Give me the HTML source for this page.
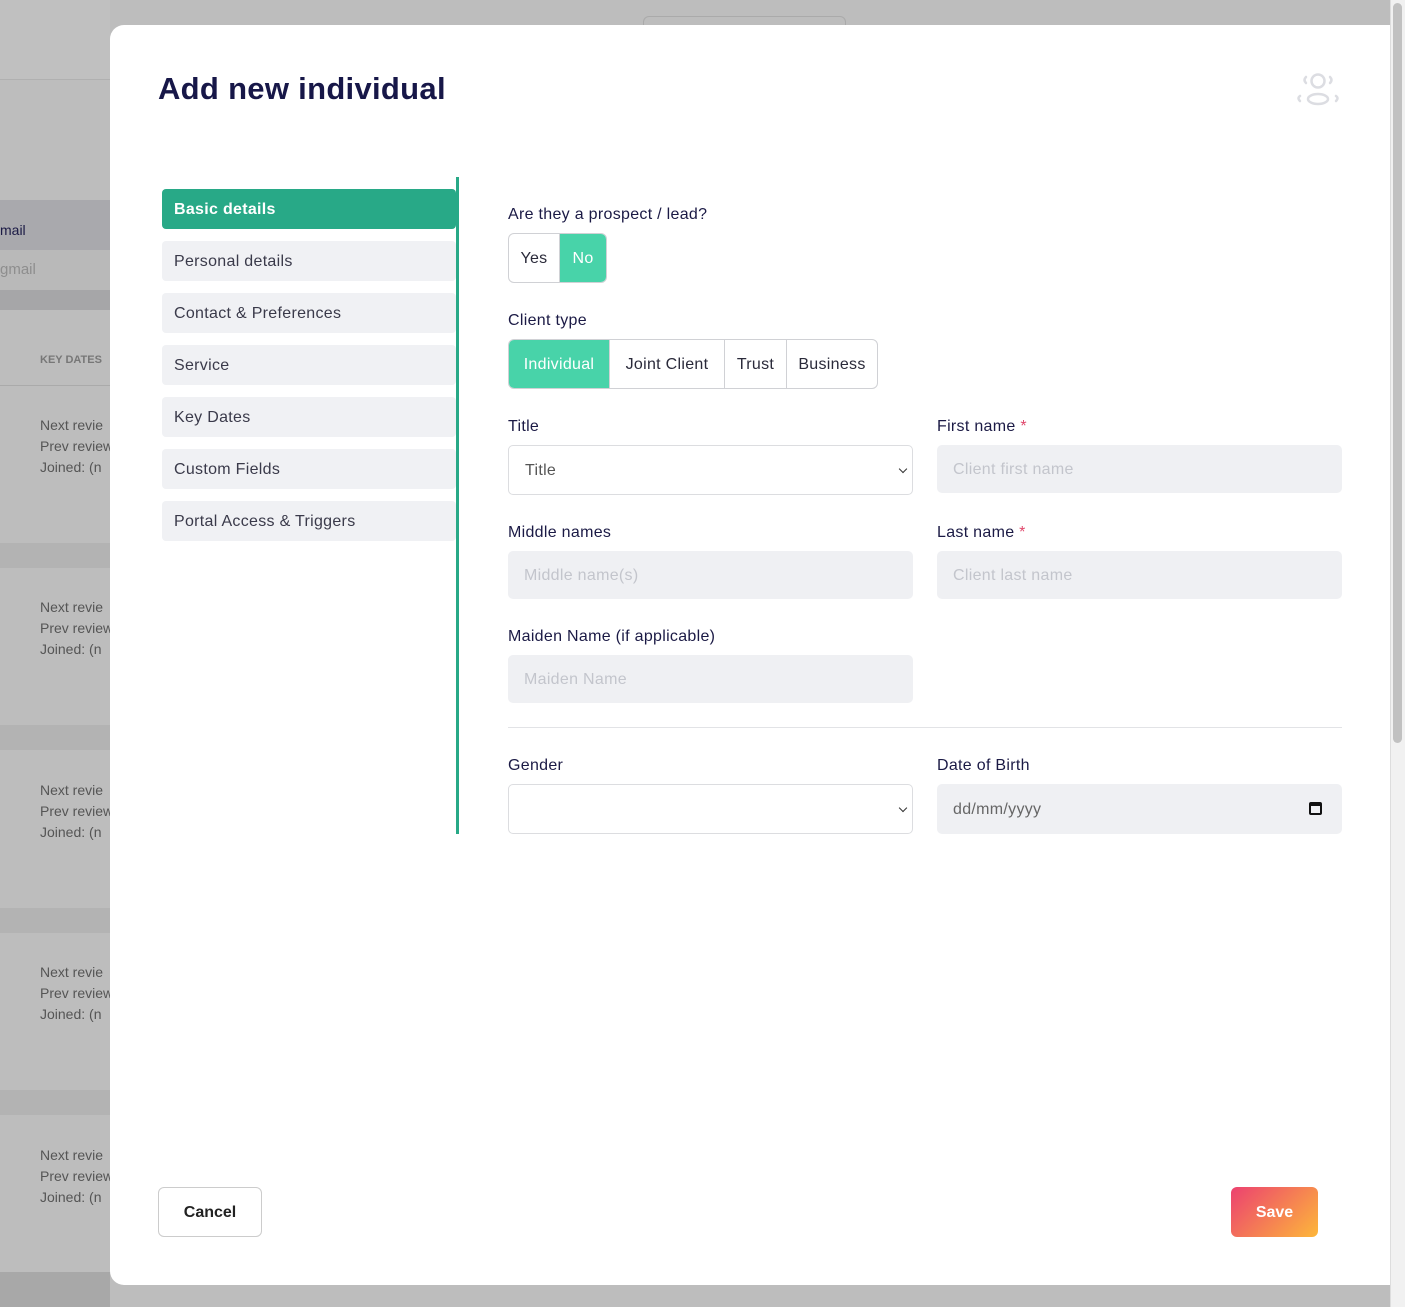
<!DOCTYPE html>
<html><head><style>
*{box-sizing:border-box;margin:0;padding:0}
body{width:1405px;height:1307px;overflow:hidden;background:#bdbdbd;font-family:"Liberation Sans",sans-serif;position:relative;color:#1b1a45}
.bg{position:absolute;left:0;width:110px}
.modal{position:absolute;left:110px;top:25px;width:1280px;height:1260px;background:#fff;border-radius:14px 0 0 14px}
h1{position:absolute;left:48px;top:46px;font-size:31px;font-weight:bold;color:#171748;letter-spacing:0.3px}
.nav{position:absolute;left:52px;width:294px;height:40px;background:#f0f1f4;border-radius:4px;font-size:16px;color:#3a3a4a;padding:12px 12px;letter-spacing:0.3px}
.nav.act{background:#28a987;color:#fff;font-weight:bold}
.vline{position:absolute;left:346px;top:152px;width:3px;height:657px;background:#28a987}
.lbl{position:absolute;font-size:16px;color:#1b1a45;letter-spacing:0.3px;margin-top:2px}
.inp{position:absolute;height:48px;width:405px;background:#eff0f3;border-radius:5px;font-size:16px;color:#c3c5cc;padding:16px 16px;letter-spacing:0.3px}
.sel{position:absolute;height:50px;width:405px;background:#fff;border:1px solid #dcdde0;border-radius:5px;font-size:16px;color:#555;padding:16px 16px;letter-spacing:0.3px}
.chev{position:absolute;right:6px;top:20px;width:6px;height:6px;border-right:1.5px solid #333;border-bottom:1.5px solid #333;transform:rotate(45deg)}
.seg{position:absolute;display:flex;border:1px solid #d0d1d5;border-radius:6px;overflow:hidden;height:50px;font-size:16px;letter-spacing:0.3px}
.seg div{text-align:center;line-height:50px;border-right:1px solid #d0d1d5;color:#2a2a3a}
.seg div:last-child{border-right:none}
.seg .on{background:#48d3a9;color:#fff}
.star{color:#e0476b}
</style></head><body>
<div class="bg" style="top:0;height:80px;background:#c0c0c0;border-bottom:1px solid #b0b0b0"></div>
<div class="bg" style="top:200px;height:50px;background:#a9a9ad"></div>
<div class="bg" style="top:250px;height:40px;background:#b9b9b9"></div>
<div class="bg" style="top:290px;height:20px;background:#a6a6a8"></div>
<div style="position:absolute;left:0;top:222px;font-size:14px">mail</div>
<div style="position:absolute;left:0;top:261px;font-size:15px;color:#8e8e8e">gmail</div>
<div style="position:absolute;left:40px;top:354px;font-size:11px;font-weight:bold;color:#777">KEY DATES</div>
<div class="bg" style="top:385px;height:1px;background:#aaa"></div>
<div class="bg" style="top:543px;height:25px;background:#b3b3b3"></div>
<div class="bg" style="top:725px;height:25px;background:#b3b3b3"></div>
<div class="bg" style="top:908px;height:25px;background:#b3b3b3"></div>
<div class="bg" style="top:1090px;height:25px;background:#b3b3b3"></div>
<div class="bg" style="top:1272px;height:35px;background:#a8a8a8"></div>
<div style="position:absolute;left:40px;top:415px;font-size:14px;line-height:21px;color:#555">Next revie<br>Prev review<br>Joined: (n</div>
<div style="position:absolute;left:40px;top:597px;font-size:14px;line-height:21px;color:#555">Next revie<br>Prev review<br>Joined: (n</div>
<div style="position:absolute;left:40px;top:780px;font-size:14px;line-height:21px;color:#555">Next revie<br>Prev review<br>Joined: (n</div>
<div style="position:absolute;left:40px;top:962px;font-size:14px;line-height:21px;color:#555">Next revie<br>Prev review<br>Joined: (n</div>
<div style="position:absolute;left:40px;top:1145px;font-size:14px;line-height:21px;color:#555">Next revie<br>Prev review<br>Joined: (n</div>
<div style="position:absolute;left:643px;top:16px;width:203px;height:10px;border:1px solid #aaa;border-bottom:none;border-radius:6px 6px 0 0"></div>
<div style="position:absolute;left:1390px;top:0;width:15px;height:1307px;background:#f1f1f1;border-left:1px solid #ddd"></div>
<div style="position:absolute;left:1393px;top:3px;width:9px;height:740px;background:#c1c1c1;border-radius:5px"></div>

<div class="modal">
<h1>Add new individual</h1>
<svg style="position:absolute;left:1184px;top:44px" width="48" height="40" viewBox="0 0 48 40" fill="none" stroke="#dcdde2" stroke-width="2.5" stroke-linecap="round"><circle cx="24" cy="12" r="6.5"/><ellipse cx="24" cy="30" rx="10" ry="5"/><path d="M12 8q-3 3 0 6M36 8q3 3 0 6M6 27q-3 2 0 5M42 27q3 2 0 5"/></svg>
<div class="vline"></div>
<div class="nav act" style="top:164px">Basic details</div>
<div class="nav" style="top:216px">Personal details</div>
<div class="nav" style="top:268px">Contact &amp; Preferences</div>
<div class="nav" style="top:320px">Service</div>
<div class="nav" style="top:372px">Key Dates</div>
<div class="nav" style="top:424px">Custom Fields</div>
<div class="nav" style="top:476px">Portal Access &amp; Triggers</div>

<div class="lbl" style="left:398px;top:179px">Are they a prospect / lead?</div>
<div class="seg" style="left:398px;top:208px"><div style="width:51px">Yes</div><div class="on" style="width:46px">No</div></div>
<div class="lbl" style="left:398px;top:285px">Client type</div>
<div class="seg" style="left:398px;top:314px"><div class="on" style="width:101px">Individual</div><div style="width:115px">Joint Client</div><div style="width:62px">Trust</div><div style="width:90px">Business</div></div>

<div class="lbl" style="left:398px;top:391px">Title</div>
<div class="sel" style="left:398px;top:420px">Title<span class="chev"></span></div>
<div class="lbl" style="left:827px;top:391px">First name <span class="star">*</span></div>
<div class="inp" style="left:827px;top:420px">Client first name</div>
<div class="lbl" style="left:398px;top:497px">Middle names</div>
<div class="inp" style="left:398px;top:526px">Middle name(s)</div>
<div class="lbl" style="left:827px;top:497px">Last name <span class="star">*</span></div>
<div class="inp" style="left:827px;top:526px">Client last name</div>
<div class="lbl" style="left:398px;top:601px">Maiden Name (if applicable)</div>
<div class="inp" style="left:398px;top:630px">Maiden Name</div>
<div style="position:absolute;left:398px;top:702px;width:834px;height:1px;background:#e2e3e6"></div>
<div class="lbl" style="left:398px;top:730px">Gender</div>
<div class="sel" style="left:398px;top:759px"><span class="chev"></span></div>
<div class="lbl" style="left:827px;top:730px">Date of Birth</div>
<div class="inp" style="left:827px;top:759px;height:50px;color:#666;padding-top:17px">dd/mm/yyyy<span style="position:absolute;right:20px;top:18px;width:13px;height:13px;border:2px solid #111;border-top-width:4px;border-radius:2px"></span></div>

<div style="position:absolute;left:48px;top:1162px;width:104px;height:50px;border:1px solid #ccc;border-radius:6px;font-size:16px;font-weight:bold;text-align:center;line-height:50px;color:#222">Cancel</div>
<div style="position:absolute;left:1121px;top:1162px;width:87px;height:50px;border-radius:6px;background:linear-gradient(135deg,#ec4170,#fdb73a);font-size:16px;font-weight:bold;text-align:center;line-height:52px;color:#fff">Save</div>
</div>
</body></html>
